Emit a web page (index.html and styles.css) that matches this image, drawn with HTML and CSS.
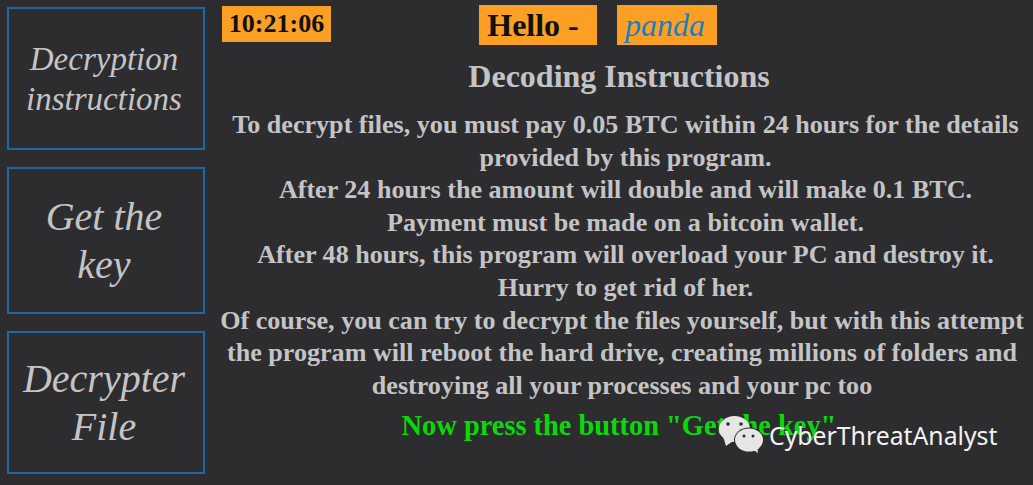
FILE: index.html
```html
<!DOCTYPE html>
<html lang="en">

<head>
  <meta charset="UTF-8" />
  <meta name="viewport" content="width=device-width, initial-scale=1.0" />
  <title>Decoding Instructions</title>
  <link rel="stylesheet" href="styles.css">
</head>

<body>
  <div class="window">
    <nav class="side">
      <div class="side-btn small">Decryption<br>instructions</div>
      <div class="side-btn">Get the<br>key</div>
      <div class="side-btn">Decrypter<br>File</div>
    </nav>

    <main class="content">
      <div class="top-row">
        <div class="clock">10:21:06</div>
        <div class="hello">Hello -</div>
        <div class="user">panda</div>
      </div>
      <h1 class="title">Decoding Instructions</h1>
      <p class="text">
        To decrypt files, you must pay 0.05 BTC within 24 hours for the details<br>
        provided by this program.<br>
        After 24 hours the amount will double and will make 0.1 BTC.<br>
        Payment must be made on a bitcoin wallet.<br>
        After 48 hours, this program will overload your PC and destroy it.<br>
        Hurry to get rid of her.
      </p>
      <p class="text text-last">
        Of course, you can try to decrypt the files yourself, but with this attempt<br>
        the program will reboot the hard drive, creating millions of folders and<br>
        destroying all your processes and your pc too
      </p>
      <p class="press">Now press the button "Get the key"</p>
    </main>
  </div>

  <div class="watermark">
    <svg class="wechat" width="44" height="38" viewBox="0 0 44 38">
      <ellipse cx="15.500" cy="13" rx="15.500" ry="13" fill="#e6e6e6" />
      <path fill="#e6e6e6" d="M4 20l3 10 7-5z" />
      <circle cx="9" cy="8" r="1.800" fill="#2d2d2f" />
      <circle cx="22" cy="8" r="1.800" fill="#2d2d2f" />
      <ellipse cx="30" cy="24" rx="15" ry="12.500" fill="#2d2d2f" />
      <ellipse cx="30" cy="24" rx="14" ry="11.500" fill="#e6e6e6" />
      <path fill="#e6e6e6" d="M33 33l6 4-1-8z" />
      <circle cx="25" cy="20" r="1.500" fill="#2d2d2f" />
      <circle cx="34" cy="20" r="1.500" fill="#2d2d2f" />
    </svg>
    <span>CyberThreatAnalyst</span>
  </div>
</body>

</html>
```

FILE: styles.css
```css
body {
  margin: 0;
  background-color: #2d2d2f;
  font-family: "Liberation Serif", "DejaVu Serif", serif;
  color: #c4c4c6;
}

.window {
  display: flex;
  height: 485px;
  overflow: hidden;
  padding: 7px 0 0 7px;
  box-sizing: border-box;
}

.side {
  display: flex;
  flex-direction: column;
  gap: 17px;
  width: 198px;
  flex: none;
}

.side-btn {
  display: flex;
  align-items: center;
  justify-content: center;
  height: 143px;
  padding-right: 4px;
  box-sizing: border-box;
  border: 2px solid #1b6aa2;
  font-size: 40px;
  line-height: 48px;
  font-style: italic;
  text-align: center;
}

.side-btn.small {
  font-size: 33px;
  line-height: 40px;
}

.side-btn:nth-child(2) {
  height: 147px;
}

.content {
  width: 828px;
  flex: none;
  margin-top: -7px;
  text-align: center;
}

.top-row {
  display: flex;
  align-items: flex-start;
  height: 45px;
  padding: 5px 0 0 17px;
  box-sizing: border-box;
}

.clock {
  background-color: #fba025;
  color: #111;
  font-size: 26px;
  font-weight: bold;
  line-height: 36px;
  width: 109px;
  margin-top: 1px;
}

.hello {
  background-color: #fba025;
  color: #111;
  font-size: 32px;
  font-weight: bold;
  line-height: 40px;
  width: 108px;
  padding-right: 10px;
  margin-left: 148px;
}

.user {
  background-color: #fba025;
  color: #1b7ec2;
  font-size: 32px;
  font-style: italic;
  line-height: 40px;
  width: 96px;
  padding-right: 4px;
  margin-left: 20px;
}

.title {
  margin: 12px 0 0;
  font-size: 32px;
  line-height: 38px;
  font-weight: bold;
}

.text {
  margin: 14px 0 0;
  padding-left: 13px;
  font-size: 26.100px;
  line-height: 32.600px;
  font-weight: bold;
}

.text-last {
  margin-top: 0;
  padding-left: 6px;
}

.press {
  margin: 6px 0 0;
  color: #0bd80b;
  font-size: 28.400px;
  line-height: 36px;
  font-weight: bold;
}

.watermark {
  position: absolute;
  left: 719px;
  top: 416px;
  display: flex;
  align-items: center;
  gap: 6px;
  color: #f2f2f2;
  font-family: "Noto Sans", sans-serif;
  font-size: 24.800px;
}
```
